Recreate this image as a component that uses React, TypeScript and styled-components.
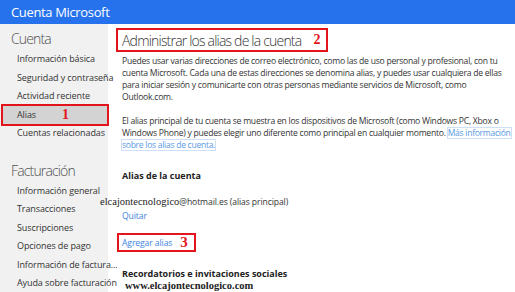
import styled, { createGlobalStyle } from "styled-components";

const GlobalStyle = createGlobalStyle`
  html, body {
    margin: 0;
    padding: 0;
    background: #fff;
  }
  body {
    font-family: "Open Sans", "Liberation Sans", sans-serif;
    color: #333;
  }
`;

const cuentaItems = [
  "Información básica",
  "Seguridad y contraseña",
  "Actividad reciente",
  "Alias",
  "Cuentas relacionadas",
];

const facturacionItems = [
  "Información general",
  "Transacciones",
  "Suscripciones",
  "Opciones de pago",
  "Información de factura...",
  "Ayuda sobre facturación",
];

export default function App() {
  return (
    <Page>
      <GlobalStyle />
      <Header>Cuenta Microsoft</Header>
      <Body>
        <Sidebar>
          <SectionTitle>Cuenta</SectionTitle>
          {cuentaItems.map((item) => (
            <NavItem key={item} $active={item === "Alias"}>
              {item}
              {item === "Alias" && <Marker $left={59}>1</Marker>}
            </NavItem>
          ))}
          <SectionTitle $gap={17}>Facturación</SectionTitle>
          {facturacionItems.map((item) => (
            <NavItem key={item}>{item}</NavItem>
          ))}
        </Sidebar>

        <Main>
          <TitleBox>
            Administrar los alias de la cuenta
            <Number>2</Number>
          </TitleBox>
          <Paragraph>
            Puedes usar varias direcciones de correo electrónico, como las de uso personal y
            profesional, con tu cuenta Microsoft. Cada una de estas direcciones se denomina alias,
            y puedes usar cualquiera de ellas para iniciar sesión y comunicarte con otras personas
            mediante servicios de Microsoft, como Outlook.com.
          </Paragraph>
          <Paragraph $top={12}>
            El alias principal de tu cuenta se muestra en los dispositivos de Microsoft (como
            Windows PC, Xbox o Windows Phone) y puedes elegir uno diferente como principal en
            cualquier momento. <FocusLink>Más información</FocusLink>{" "}
            <FocusLink>sobre los alias de cuenta.</FocusLink>
          </Paragraph>

          <Subhead $top={19}>Alias de la cuenta</Subhead>
          <EmailRow>
            <Stamp>elcajontecnologico</Stamp>@hotmail.es (alias principal)
          </EmailRow>
          <Link $top={1}>Quitar</Link>
          <AddBox>
            <Link>Agregar alias</Link>
            <Number $size={15}>3</Number>
          </AddBox>
          <Subhead $top={16}>Recordatorios e invitaciones sociales</Subhead>
          <Watermark>www.elcajontecnologico.com</Watermark>
        </Main>
      </Body>
    </Page>
  );
}

const Page = styled.div`
  width: 515px;
  height: 292px;
  overflow: hidden;
  display: flex;
  flex-direction: column;
`;

const Header = styled.header`
  height: 24px;
  flex: none;
  background: #2672ec;
  color: #fff;
  font-size: 13px;
  letter-spacing: -0.35px;
  line-height: 25px;
  padding-left: 11px;
`;

const Body = styled.div`
  flex: 1;
  display: flex;
  min-height: 0;
`;

const Sidebar = styled.nav`
  width: 108px;
  flex: none;
  background: #f1f1f1;
  padding-top: 4px;
  box-sizing: border-box;
`;

const SectionTitle = styled.div<{ $gap?: number }>`
  font-size: 14px;
  letter-spacing: -0.85px;
  font-weight: 300;
  color: #505050;
  line-height: 22px;
  padding-left: 11px;
  margin-top: ${(p) => p.$gap ?? 0}px;
`;

const NavItem = styled.div<{ $active?: boolean }>`
  position: relative;
  height: 18.5px;
  line-height: 18.5px;
  font-size: 9px;
  letter-spacing: -0.1px;
  color: #333;
  white-space: nowrap;
  padding-left: ${(p) => (p.$active ? 14 : 17)}px;
  margin: ${(p) => (p.$active ? "0 1px 0 3px" : "0")};
  background: ${(p) => (p.$active ? "#d3d3d3" : "transparent")};
  outline: ${(p) => (p.$active ? "2px solid #e3141c" : "none")};
`;

const Marker = styled.span<{ $left: number }>`
  position: absolute;
  left: ${(p) => p.$left}px;
  top: 0;
  font-family: "Liberation Serif", serif;
  font-weight: 700;
  font-size: 14px;
  color: #e3141c;
`;

const Main = styled.main`
  flex: 1;
  padding: 4px 4px 0 14px;
  min-width: 0;
`;

const TitleBox = styled.div`
  display: inline-flex;
  align-items: center;
  gap: 12px;
  margin-left: -6px;
  height: 20px;
  padding: 0 6px 0 4px;
  border: 2px solid #e3141c;
  font-size: 14px;
  letter-spacing: -0.8px;
  font-weight: 300;
  color: #333;
  white-space: nowrap;
`;

const Number = styled.span<{ $size?: number }>`
  font-family: "Liberation Serif", serif;
  font-weight: 700;
  font-size: ${(p) => p.$size ?? 14}px;
  letter-spacing: 0;
  color: #e3141c;
`;

const Paragraph = styled.p<{ $top?: number }>`
  margin: ${(p) => p.$top ?? 3}px 0 0;
  font-size: 8.6px;
  letter-spacing: -0.25px;
  line-height: 12px;
  color: #333;
`;

const FocusLink = styled.span`
  display: inline-block;
  line-height: 10px;
  color: #5a9be6;
  letter-spacing: -0.3px;
  outline: 1px solid #cfe0f6;
  outline-offset: 0;
  white-space: nowrap;
`;

const Subhead = styled.div<{ $top?: number }>`
  margin-top: ${(p) => p.$top ?? 0}px;
  font-size: 9px;
  font-weight: 700;
  line-height: 12px;
  color: #222;
`;

const EmailRow = styled.div`
  margin: 13px 0 0 -22px;
  font-size: 8.6px;
  letter-spacing: -0.1px;
  line-height: 13px;
  color: #333;
  white-space: nowrap;
`;

const Stamp = styled.span`
  font-family: "Liberation Serif", serif;
  font-size: 10.5px;
  letter-spacing: 0;
  color: #222;
`;

const Link = styled.span<{ $top?: number }>`
  display: block;
  margin-top: ${(p) => p.$top ?? 0}px;
  font-size: 8.6px;
  letter-spacing: -0.1px;
  line-height: 12px;
  color: #3c84e0;
`;

const AddBox = styled.div`
  display: inline-flex;
  align-items: center;
  gap: 8px;
  height: 15px;
  margin: 11px 0 0 -5px;
  padding: 0 6px 0 3px;
  border: 2px solid #e3141c;
`;

const Watermark = styled.div`
  margin: 0 0 0 3px;
  font-family: "Liberation Serif", serif;
  font-weight: 700;
  font-size: 10.5px;
  line-height: 12px;
  color: #222;
`;
